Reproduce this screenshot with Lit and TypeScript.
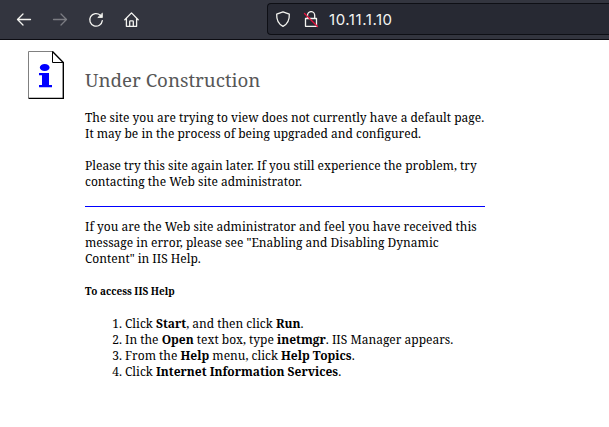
import { LitElement, html, css } from "lit";
import { customElement } from "lit/decorators.js";

@customElement("nav-bar")
class NavBar extends LitElement {
  static styles = css`
    :host { display: flex; box-sizing: border-box; height: 40px; background: #33353f; border-bottom: 1px solid #0c0c12; overflow: hidden; }
    svg { display: block; flex: none; fill: none; stroke: #f4f4f0; stroke-width: 1.3; stroke-linecap: round; stroke-linejoin: round; }
    .tools { display: flex; gap: 20px; padding: 12px 0 0 16px; width: 251px; flex: none; box-sizing: content-box; }
    .off { stroke: #7b7c82; }
    .url { flex: 1; display: flex; box-sizing: border-box; height: 32px; margin-top: 3px; padding: 7px 0 0 7px; background: #272933; border: 1px solid #0e0f15; border-right: 0; border-radius: 4px 0 0 4px; }
    .lock { margin-left: 12px; }
    .address { margin-left: 10px; font: 15px/18px Inter, sans-serif; letter-spacing: .55px; color: #f4f4f2; white-space: nowrap; }
  `;
  render() {
    return html`
      <div class="tools">
        <svg width="16" height="16" viewBox="0 0 16 16"><path d="M14.5 7.5H1.5M7 2L1.5 7.5L7 13"/></svg>
        <svg class="off" width="16" height="16" viewBox="0 0 16 16"><path d="M1.5 7.5H14.5M9 2L14.5 7.5L9 13"/></svg>
        <svg width="16" height="16" viewBox="0 0 16 16"><path d="M12.3 3.2A6.3 6.3 0 1 0 14.3 8.6"/><path d="M14.4 1.5V5.5H10.2Z" fill="#f4f4f0" stroke-width=".8"/></svg>
        <svg width="16" height="16" viewBox="0 0 16 16"><path d="M.8 7.8L7.5 .9L14.2 7.8M2.4 6.6V14.3H12.6V6.6M5.7 14V9.6Q5.7 8.8 6.5 8.8H8.5Q9.3 8.8 9.3 9.6V14"/></svg>
      </div>
      <div class="url">
        <svg width="16" height="18" viewBox="0 0 16 18"><path d="M8 .9L14.3 3.1C14.6 9 12.7 13 8 15.3C3.3 13 1.4 9 1.7 3.1Z"/></svg>
        <svg class="lock" width="16" height="18" viewBox="0 0 16 18"><path d="M4.5 7V4.2A3.6 3.6 0 0 1 11.7 4.2V7M2.5 7.5H13.5V15.3H2.5Z"/><path d="M1.5 2.5L14.5 15.5" stroke="#e8103c"/></svg>
        <span class="address">10.11.1.10</span>
      </div>`;
  }
}

@customElement("info-page")
class InfoPage extends LitElement {
  static styles = css`
    :host { display: flex; padding: 11px 0 0 27px; font: 12px/16px "Noto Serif", "Liberation Serif", serif; color: #000; }
    .icon { flex: none; width: 38px; height: 49px; margin-right: 20px; }
    .body { width: 400px; }
    h1 { margin: 16px 0 17px; font-size: 18.72px; line-height: 26px; font-weight: 400; color: #575757; }
    p { margin: 0 0 16px; white-space: nowrap; }
    hr { height: 1px; margin: 0 0 12px; border: 0; background: #0000ff; }
    h2 { margin: 0 0 17px; font-size: 10px; line-height: 16px; }
    ol { margin: 0; padding-left: 40px; }
  `;
  render() {
    return html`
      <svg class="icon" viewBox="0 0 38 49">
        <path d="M1.5 .5H25.5L36 11.5V47.5H1.5Z" fill="#fff"/>
        <path d="M1.5 47V.5H26" fill="none" stroke="#808080"/>
        <path d="M25.5 .5V11.5H36.5" fill="none" stroke="#000"/>
        <path d="M25.5 .5L36.3 11.5V47.4H1.5" fill="none" stroke="#000" stroke-width="1.4"/>
        <path d="M12 22H22V34H25V36.3H12V34H15V24.3H12ZM12.8 16.5a4.9 3.5 0 1 0 9.8 0a4.9 3.5 0 1 0 -9.8 0Z" fill="#0000ff"/>
      </svg>
      <div class="body">
        <h1>Under Construction</h1>
        <p>The site you are trying to view does not currently have a default page.<br>It may be in the process of being upgraded and configured.</p>
        <p>Please try this site again later. If you still experience the problem, try<br>contacting the Web site administrator.</p>
        <hr>
        <p>If you are the Web site administrator and feel you have received this<br>message in error, please see "Enabling and Disabling Dynamic<br>Content" in IIS Help.</p>
        <h2>To access IIS Help</h2>
        <ol>
          <li>Click <b>Start</b>, and then click <b>Run</b>.</li>
          <li>In the <b>Open</b> text box, type <b>inetmgr</b>. IIS Manager appears.</li>
          <li>From the <b>Help</b> menu, click <b>Help Topics</b>.</li>
          <li>Click <b>Internet Information Services</b>.</li>
        </ol>
      </div>`;
  }
}

@customElement("app-root")
class AppRoot extends LitElement {
  static styles = css`:host { display: block; height: 427px; background: #fff; overflow: hidden; }`;
  render() { return html`<nav-bar></nav-bar><info-page></info-page>`; }
}
